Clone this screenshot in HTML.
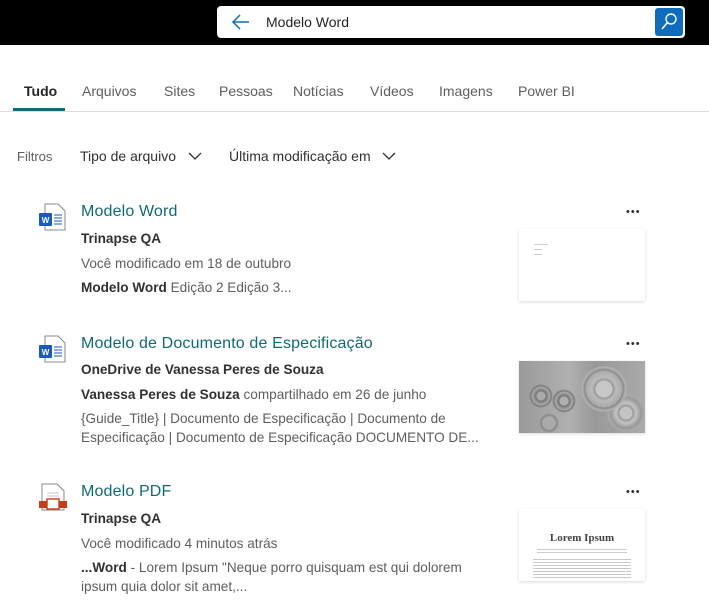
<!DOCTYPE html>
<html><head><meta charset="utf-8"><style>
*{margin:0;padding:0;box-sizing:border-box}
body{width:709px;height:614px;overflow:hidden;background:#fff;font-family:"Liberation Sans",sans-serif;color:#323130;position:relative}
.hdr{position:absolute;left:0;top:0;width:709px;height:45px;background:#000}
.sb{position:absolute;left:217px;top:6px;width:468px;height:32px;background:#fff;border-radius:4px}
.sb .t{position:absolute;left:49px;top:8px;font-size:14px;color:#252423}
.btn{position:absolute;left:438px;top:2px;width:28px;height:28px;background:#0f6cbd;border-radius:3px}
.abs{position:absolute;white-space:nowrap}
.tab{font-size:14px;color:#605e5c;top:83px}
.ttl{font-size:16px;color:#0f6a73;letter-spacing:.15px}
.l{font-size:13.6px;color:#605e5c;left:81px}
.d{font-size:13.6px;color:#323130;left:81px;font-weight:bold}
.thumb{position:absolute;left:519px;width:126px;height:72px;background:#fff;box-shadow:0 1px 3px rgba(0,0,0,.15)}
.dots{position:absolute;left:626px;font-size:11px;color:#323130;letter-spacing:1px}
</style></head><body>
<div class="hdr"><div class="sb">
<svg style="position:absolute;left:14px;top:7px" width="20" height="18" viewBox="0 0 20 18"><path d="M9 2L2 9l7 7M2 9h16" stroke="#0f6cbd" stroke-width="1.5" fill="none"/></svg>
<span class="t">Modelo Word</span>
<div class="btn"><svg width="28" height="28" viewBox="0 0 28 28"><circle cx="16" cy="11" r="5" stroke="#fff" stroke-width="1.4" fill="none"/><path d="M12.5 14.5L7 21" stroke="#fff" stroke-width="1.6"/></svg></div>
</div></div>
<span class="abs tab" style="left:24px;color:#252423;font-weight:bold">Tudo</span>
<span class="abs tab" style="left:82px">Arquivos</span>
<span class="abs tab" style="left:164px">Sites</span>
<span class="abs tab" style="left:219px">Pessoas</span>
<span class="abs tab" style="left:293px">Notícias</span>
<span class="abs tab" style="left:370px">Vídeos</span>
<span class="abs tab" style="left:439px">Imagens</span>
<span class="abs tab" style="left:518px">Power BI</span>
<div class="abs" style="left:13px;top:108px;width:52px;height:3px;background:#0f6a73"></div>
<div class="abs" style="left:0;top:111px;width:709px;height:1px;background:#e1dfdd"></div>
<span class="abs" style="left:17px;top:149px;font-size:13px;color:#605e5c">Filtros</span>
<span class="abs" style="left:80px;top:148px;font-size:14px;color:#323130">Tipo de arquivo</span>
<svg class="abs" style="left:188px;top:151px" width="14" height="10"><path d="M1 2l6 6 6-6" stroke="#323130" stroke-width="1.3" fill="none"/></svg>
<span class="abs" style="left:229px;top:148px;font-size:14px;color:#323130">Última modificação em</span>
<svg class="abs" style="left:382px;top:151px" width="14" height="10"><path d="M1 2l6 6 6-6" stroke="#323130" stroke-width="1.3" fill="none"/></svg>

<svg class="abs" style="left:38px;top:203px" width="30" height="30" viewBox="0 0 30 30"><path d="M7 1h13l7 7v19H7z" fill="#fff" stroke="#8a8886"/><path d="M16 12h8M16 15h8M16 18h8M16 21h8" stroke="#185abd"/><rect x="1" y="10" width="13" height="13" rx="1" fill="#185abd"/><text x="7.5" y="20" font-size="8" fill="#fff" text-anchor="middle" font-family="Liberation Sans" font-weight="bold">W</text></svg>
<span class="abs ttl" style="left:81px;top:203px">Modelo Word</span>
<span class="abs d" style="top:231px">Trinapse QA</span>
<span class="abs l" style="top:256px">Você modificado em 18 de outubro</span>
<span class="abs l" style="top:280px"><b style="color:#323130">Modelo Word</b> Edição 2 Edição 3...</span>
<span class="dots" style="top:206px">•••</span>
<div class="thumb" style="top:229px"><div style="position:absolute;left:15px;top:15px;width:14px;height:1px;background:#ccc"></div><div style="position:absolute;left:15px;top:20px;width:8px;height:1px;background:#ccc"></div><div style="position:absolute;left:15px;top:25px;width:8px;height:1px;background:#ccc"></div></div>

<svg class="abs" style="left:38px;top:335px" width="30" height="30" viewBox="0 0 30 30"><path d="M7 1h13l7 7v19H7z" fill="#fff" stroke="#8a8886"/><path d="M16 12h8M16 15h8M16 18h8M16 21h8" stroke="#185abd"/><rect x="1" y="10" width="13" height="13" rx="1" fill="#185abd"/><text x="7.5" y="20" font-size="8" fill="#fff" text-anchor="middle" font-family="Liberation Sans" font-weight="bold">W</text></svg>
<span class="abs ttl" style="left:81px;top:335px">Modelo de Documento de Especificação</span>
<span class="abs d" style="top:362px">OneDrive de Vanessa Peres de Souza</span>
<span class="abs l" style="top:387px"><b style="color:#323130">Vanessa Peres de Souza</b> compartilhado em 26 de junho</span>
<span class="abs l" style="top:411px">{Guide_Title} | Documento de Especificação | Documento de</span>
<span class="abs l" style="top:430px">Especificação | Documento de Especificação DOCUMENTO DE...</span>
<span class="dots" style="top:338px">•••</span>
<div class="thumb" style="top:361px;background:radial-gradient(circle at 85px 28px,#c8c8c8 0 8px,#999 9px,#bbb 12px,#aaa 18px,#8a8a8a 19px,#b5b5b5 22px,transparent 23px),radial-gradient(circle at 107px 52px,#c4c4c4 0 6px,#999 7px,#c4c4c4 10px,#999 15px,#aaa 18px,transparent 19px),radial-gradient(circle at 22px 35px,#aaa 0 4px,#777 5px,#aaa 9px,#777 10px,transparent 12px),radial-gradient(circle at 45px 40px,#b0b0b0 0 4px,#777 5px,#aaa 9px,#777 10px,transparent 12px),radial-gradient(circle at 30px 62px,#aaa 0 6px,#888 8px,transparent 10px),linear-gradient(90deg,#9a9a9a,#b0b0b0 40%,#999 60%,#aaa)"></div>

<svg class="abs" style="left:38px;top:483px" width="30" height="30" viewBox="0 0 30 30"><path d="M4 1h15l7 7v19H4z" fill="#fff" stroke="#8a8886"/><path d="M9 10h12M9 13h12M9 16h12" stroke="#c8c6c4"/><rect x="1" y="18" width="28" height="7" fill="#c43e1c"/><rect x="9" y="16" width="12" height="10" fill="#fff" stroke="#c43e1c" stroke-width="1.4"/></svg>
<span class="abs ttl" style="left:81px;top:483px">Modelo PDF</span>
<span class="abs d" style="top:511px">Trinapse QA</span>
<span class="abs l" style="top:536px">Você modificado 4 minutos atrás</span>
<span class="abs l" style="top:560px"><b style="color:#323130">...Word</b> - Lorem Ipsum "Neque porro quisquam est qui dolorem</span>
<span class="abs l" style="top:579px">ipsum quia dolor sit amet,...</span>
<span class="dots" style="top:486px">•••</span>
<div class="thumb" style="top:509px"><div style="position:absolute;left:0;width:126px;top:23px;text-align:center;font-family:'Liberation Serif',serif;font-size:11px;font-weight:bold;color:#444">Lorem Ipsum</div><div style="position:absolute;left:18px;top:40px;width:90px;height:5px;background:repeating-linear-gradient(#ccc 0 1px,transparent 1px 3px)"></div><div style="position:absolute;left:14px;top:50px;width:98px;height:20px;background:repeating-linear-gradient(#c8c8c8 0 1px,transparent 1px 3px)"></div></div>
</body></html>
